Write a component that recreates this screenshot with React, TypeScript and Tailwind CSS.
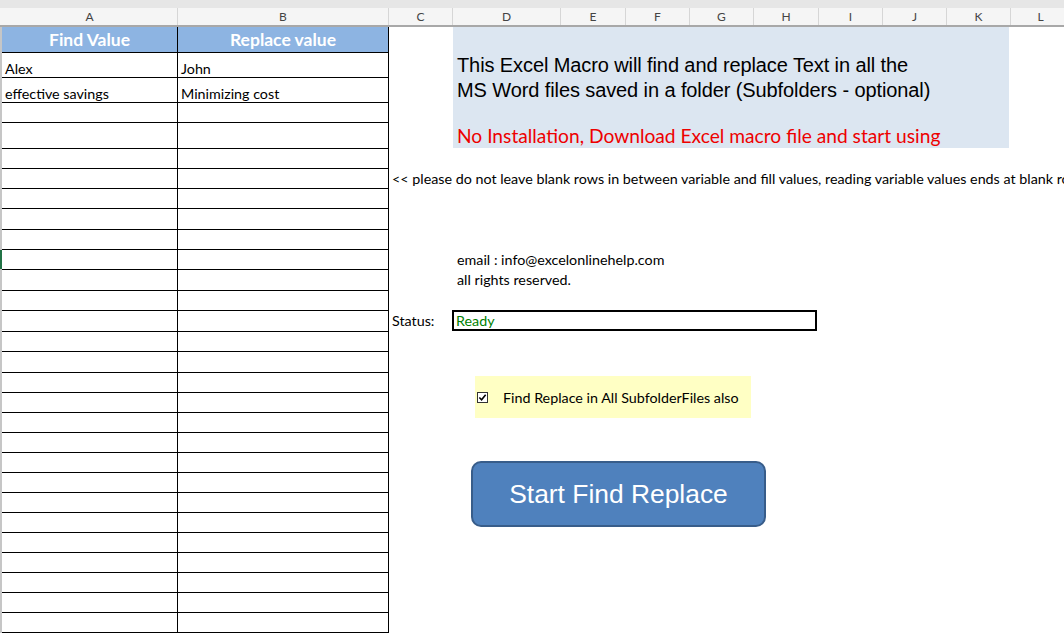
import React from "react";

// column widths (px) as they appear on the sheet
const COLS: { label: string; w: number }[] = [
  { label: "A", w: 176 },
  { label: "B", w: 211 },
  { label: "C", w: 64 },
  { label: "D", w: 108 },
  { label: "E", w: 65 },
  { label: "F", w: 64 },
  { label: "G", w: 64 },
  { label: "H", w: 65 },
  { label: "I", w: 64 },
  { label: "J", w: 64 },
  { label: "K", w: 64 },
  { label: "L", w: 60 },
];

const ROWS: { a?: string; b?: string; h: number }[] = [
  { a: "Alex", b: "John", h: 25 },
  { a: "effective savings", b: "Minimizing cost", h: 25 },
  { h: 20 },
  { h: 26 },
  { h: 20 },
  { h: 20 },
  { h: 20 },
  { h: 21 },
  { h: 20 },
  { h: 20 },
  { h: 21 },
  { h: 20 },
  { h: 21 },
  { h: 20 },
  { h: 21 },
  { h: 20 },
  { h: 20 },
  { h: 20 },
  { h: 20 },
  { h: 20 },
  { h: 20 },
  { h: 20 },
  { h: 20 },
  { h: 20 },
  { h: 20 },
  { h: 20 },
  { h: 20 },
  { h: 20 },
];

const calibri = "font-['Lato','Noto_Sans',sans-serif]";
const arial = "font-['Liberation_Sans',Arial,sans-serif]";

function ColumnHeaders() {
  return (
    <div className="flex h-[19px] border-b-2 border-[#a8a8a8] bg-[#f5f5f5] pl-[2px]">
      {COLS.map((c) => (
        <div
          key={c.label}
          style={{ width: c.w }}
          className={`flex shrink-0 items-center justify-center border-r border-[#d6d6d6] text-[12px] text-[#444] ${calibri}`}
        >
          {c.label}
        </div>
      ))}
    </div>
  );
}

function FindReplaceTable() {
  return (
    <div className={`w-[389px] shrink-0 border-l-2 border-[#c6c6c6] ${calibri}`}>
      <div className="flex h-[26px] border-b border-black bg-[#8db4e2] text-[17.5px] font-bold text-white">
        <div className="flex w-[176px] items-center justify-center border-r border-black pt-[1px]">Find Value</div>
        <div className="flex w-[211px] items-center justify-center border-r border-black pt-[1px]">Replace value</div>
      </div>
      {ROWS.map((r, i) => (
        <div key={i} style={{ height: r.h }} className="relative flex border-b border-black text-[14.3px] leading-[16px] text-black">
          {i === 9 && <span className="absolute -left-[2px] top-0 h-full w-[2px] bg-[#217346]" />}
          <div className="flex w-[176px] items-end border-r border-black pl-[3px]">{r.a}</div>
          <div className="flex w-[211px] items-end border-r border-black pl-[3px]">{r.b}</div>
        </div>
      ))}
    </div>
  );
}

function MacroPanel() {
  return (
    <div className="flex min-w-0 flex-1 flex-col overflow-hidden">
      {/* info box */}
      <div className="ml-[64px] h-[121px] w-[556px] shrink-0 bg-[#dce6f1] pl-[4px] pt-[26px]">
        <p className={`text-[20px] leading-[25px] tracking-[-0.1px] text-black ${arial}`}>
          This Excel Macro will find and replace Text in all the
          <br />
          MS Word files saved in a folder (Subfolders - optional)
        </p>
        <p className={`mt-[21px] whitespace-nowrap text-[19.2px] leading-[24px] text-[#ee0000] ${calibri}`}>
          No Installation, Download Excel macro file and start using
        </p>
      </div>

      <p className={`mt-[21px] ml-[3px] whitespace-nowrap text-[14.3px] leading-[20px] text-black ${calibri}`}>
        &lt;&lt; please do not leave blank rows in between variable and fill values, reading variable values ends at blank row
      </p>

      <div className={`mt-[61px] ml-[68px] text-[14.3px] leading-[20px] text-black ${calibri}`}>
        <p>email : info@excelonlinehelp.com</p>
        <p>all rights reserved.</p>
      </div>

      <div className={`mt-[20px] flex items-center text-[14.3px] text-black ${calibri}`}>
        <span className="w-[63px] pl-[3px]">Status:</span>
        <div className="flex h-[21px] w-[365px] items-center border-2 border-black pl-[2px] text-[#008000]">Ready</div>
      </div>

      <div className={`mt-[45px] ml-[86px] flex h-[42px] w-[276px] items-center bg-[#ffffc4] pl-[2px] text-[14.3px] text-black ${calibri}`}>
        <span className="flex h-[11px] w-[11px] items-center justify-center border border-[#333] bg-white">
          <svg viewBox="0 0 10 10" className="h-[9px] w-[9px]">
            <path d="M1.5 5 L4 7.5 L8.5 2" fill="none" stroke="#000" strokeWidth="1.8" />
          </svg>
        </span>
        <span className="ml-[15px]">Find Replace in All SubfolderFiles also</span>
      </div>

      <button
        className={`mt-[43px] ml-[82px] flex h-[66px] w-[295px] items-center justify-center rounded-[10px] border-2 border-[#385d8a] bg-[#4f81bd] text-[26.4px] text-white ${arial}`}
      >
        Start Find Replace
      </button>
    </div>
  );
}

export default function App() {
  return (
    <div className="h-[633px] w-[1064px] overflow-hidden bg-white">
      <div className="h-[8px] bg-[#e6e6e6]" />
      <ColumnHeaders />
      <div className="flex">
        <FindReplaceTable />
        <MacroPanel />
      </div>
    </div>
  );
}
